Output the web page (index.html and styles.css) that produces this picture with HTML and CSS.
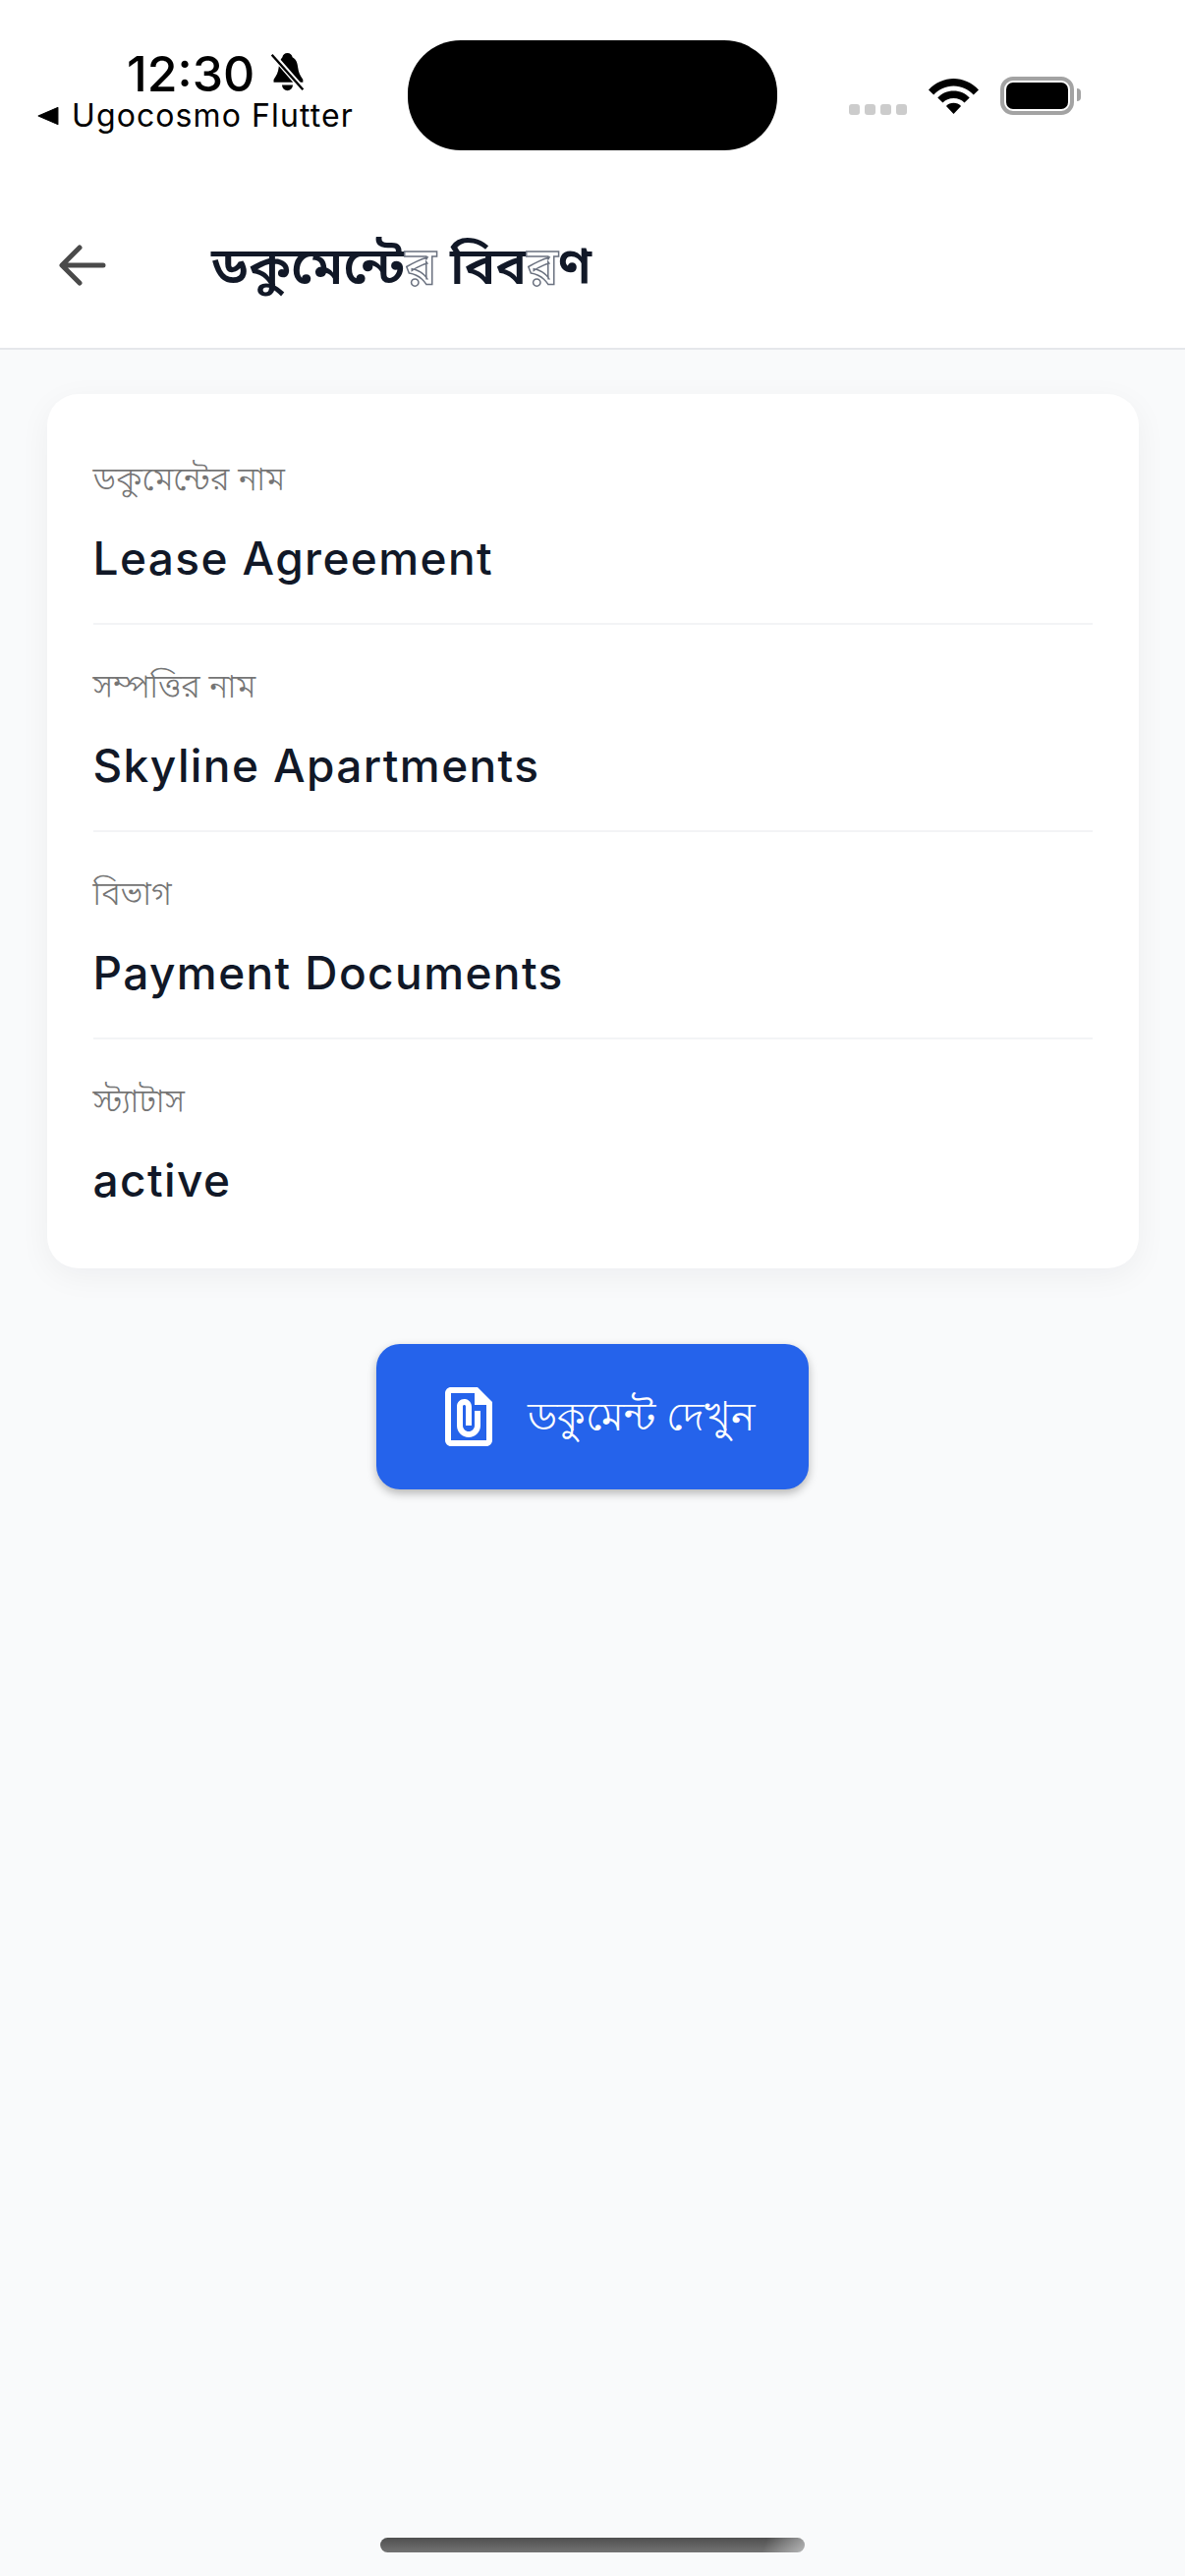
FILE: index.html
```html
<!DOCTYPE html>
<html lang="bn">
<head>
<meta charset="utf-8">
<title>ডকুমেন্টের বিবরণ</title>
<link rel="stylesheet" href="styles.css">
</head>
<body>
<div class="screen">
  <header class="top">
    <div class="status">
      <div class="status-left">
        <div class="time-row">
          <span class="time">12:30</span>
          <svg class="bell" viewBox="0 0 36 44"><path d="M18 1c3 0 5 2 5.500 4.500C28 8 29 12 29.500 17c.5 5 2.500 9 5.500 13v3H3v-3c3-4 5-8 5.500-13C9 12 10 8 12.500 5.500 13 3 15 1 18 1z" fill="#000"/><path d="M12 36h12c-.5 4-3 6-6 6s-5.500-2-6-6z" fill="#000"/><path d="M2 3l33 38" stroke="#fff" stroke-width="6"/><path d="M1 3l34 38" stroke="#000" stroke-width="2.600"/></svg>
        </div>
        <div class="back-row">
          <svg class="back-tri" viewBox="0 0 20 22" preserveAspectRatio="none"><path d="M19 1.500v19L1 11z" fill="#000" stroke="#000" stroke-linejoin="round"/></svg>
          <span class="back-app">Ugocosmo Flutter</span>
        </div>
      </div>
      <div class="island"></div>
      <div class="status-right">
        <div class="signal"><i></i><i></i><i></i><i></i></div>
        <svg class="wifi" viewBox="0 0 44 37" preserveAspectRatio="none"><path d="M0 12.500C6 5 14 1 22 1s16 4 22 11.500l-4.500 5C35 12 29 8.500 22 8.500S9 12 4.500 17.500z M8 20.500c3.500-4.500 8.500-7 14-7s10.500 2.500 14 7l-4.500 5c-2.500-3-5.500-4.500-9.500-4.500s-7 1.500-9.500 4.500z M15.500 29c1.500-2 4-3.200 6.500-3.200s5 1.200 6.500 3.200L22 37z" fill="#000"/></svg>
        <div class="battery"><div class="battery-fill"></div></div>
        <div class="battery-cap"></div>
      </div>
    </div>
    <div class="appbar">
      <svg class="arrow" viewBox="0 0 48 42"><path d="M45 21H4M21 3 3 21l18 18" fill="none" stroke="#4a4a4a" stroke-width="5" stroke-linecap="round" stroke-linejoin="round"/></svg>
      <h1 class="title">ডকুমেন্টে<span class="ra">র</span> বিব<span class="ra">র</span>ণ</h1>
    </div>
  </header>

  <main class="content">
    <section class="card">
      <div class="row">
        <div class="label">ডকুমেন্টের নাম</div>
        <div class="value">Lease Agreement</div>
      </div>
      <div class="row">
        <div class="label">সম্পত্তির নাম</div>
        <div class="value">Skyline Apartments</div>
      </div>
      <div class="row">
        <div class="label">বিভাগ</div>
        <div class="value">Payment Documents</div>
      </div>
      <div class="row">
        <div class="label">স্ট্যাটাস</div>
        <div class="value">active</div>
      </div>
    </section>
    <button class="btn">
      <svg class="doc" viewBox="0 0 24 24"><path d="M15 2H6c-1.100 0-2 .9-2 2v16c0 1.100.9 2 2 2h12c1.100 0 2-.9 2-2V7l-5-5zM6 20V4h8v4h4v12H6zm10-10v5c0 2.210-1.790 4-4 4s-4-1.790-4-4V8.500c0-1.470 1.260-2.640 2.760-2.490 1.300.13 2.240 1.320 2.240 2.630V15h-2V8.500c0-.28-.22-.5-.5-.5s-.5.220-.5.500V15c0 1.100.9 2 2 2s2-.9 2-2v-5h2z" fill="#fff"/></svg>
      <span class="btn-text">ডকুমেন্ট দেখুন</span>
    </button>
  </main>

  <div class="home-bar"></div>
</div>
</body>
</html>
```

FILE: styles.css
```css
* { box-sizing: border-box; }
html, body { margin: 0; padding: 0; }
body { background: #f9fafb; font-family: "Noto Sans", "Noto Sans Bengali", "Lohit Bengali", sans-serif; }

.screen { width: 1206px; height: 2622px; display: flex; flex-direction: column; position: relative; overflow: hidden; background: #f9fafb; }

.top { height: 356px; background: #fff; border-bottom: 2px solid #e5e7eb; flex: none; }

.status { height: 180px; position: relative; padding: 51px 0 0 36px; }
.status-left { display: flex; flex-direction: column; align-items: flex-start; }
.time-row { display: flex; align-items: center; gap: 14px; height: 48px; margin-left: 93px; }
.time { font-family: Inter, sans-serif; font-size: 50px; font-weight: 500; line-height: 48px; color: #000; }
.bell { width: 39px; height: 41px; margin-top: -4px; }
.back-row { display: flex; align-items: center; gap: 13px; height: 32px; margin-top: 3px; margin-left: 2px; }
.back-tri { width: 22px; height: 20px; }
.back-app { font-family: Inter, sans-serif; font-size: 32px; line-height: 32px; color: #000; letter-spacing: 1.1px; }

.island { position: absolute; left: 415px; top: 41px; width: 376px; height: 112px; border-radius: 54px; background: #000; }

.status-right { position: absolute; left: 864px; top: 78px; display: flex; align-items: flex-start; }
.signal { display: flex; gap: 5px; margin-top: 28px; width: 59px; }
.signal i { display: block; width: 11px; height: 11px; border-radius: 3px; background: #ccc; }
.wifi { width: 51px; height: 37px; margin-left: 22px; margin-top: 1px; }
.battery { width: 75px; height: 39px; margin-left: 22px; border: 4px solid #a3a3a3; border-radius: 13px; padding: 2px; }
.battery-fill { width: 100%; height: 100%; background: #000; border-radius: 7px; }
.battery-cap { width: 4px; height: 13px; margin-left: 3px; margin-top: 12px; background: #a3a3a3; border-radius: 0 7px 7px 0; }

.appbar { height: 174px; display: flex; align-items: center; padding-left: 60px; }
.arrow { width: 48px; height: 42px; flex: none; margin-top: 5px; }
.title { margin: 3px 0 0 107px; font-size: 53px; font-weight: 600; line-height: 80px; color: #111827; white-space: nowrap; }
.ra { color: #fff; -webkit-text-stroke: 1.5px #6b7280; }

.content { flex: 1; padding: 45px 47px 0 47px; display: flex; flex-direction: column; align-items: center; }

.card { width: 1111px; height: 890px; background: #fff; border-radius: 32px; padding: 24px 47px 0; box-shadow: 0 8px 32px rgba(17, 24, 39, .05); }
.row { height: 211px; padding-top: 39px; border-bottom: 2px solid #f3f4f6; }
.row:last-child { border-bottom: 0; }
.label { font-size: 33.5px; font-weight: 300; line-height: 44px; height: 44px; color: #757575; }
.value { font-family: Inter, "Noto Sans", sans-serif; font-size: 46px; font-weight: 500; line-height: 66px; margin-top: 27px; color: #111827; letter-spacing: 1.4px; }

.btn { margin-top: 77px; width: 440px; height: 148px; flex: none; border: 0; border-radius: 24px; background: #2563eb; display: flex; align-items: center; padding: 0 0 0 58px; gap: 24px; box-shadow: 0 4px 10px rgba(0, 0, 0, .28); }
.doc { width: 72px; height: 72px; flex: none; }
.btn-text { font-family: inherit; font-size: 40.500px; line-height: 60px; color: #fff; white-space: nowrap; }

.home-bar { position: absolute; left: 387px; top: 2583px; width: 432px; height: 15px; border-radius: 8px; background: linear-gradient(110deg, rgba(249, 250, 251, 0) 90%, rgba(249, 250, 251, .5) 100%), linear-gradient(180deg, #4f4f4f, #737373); }
```
